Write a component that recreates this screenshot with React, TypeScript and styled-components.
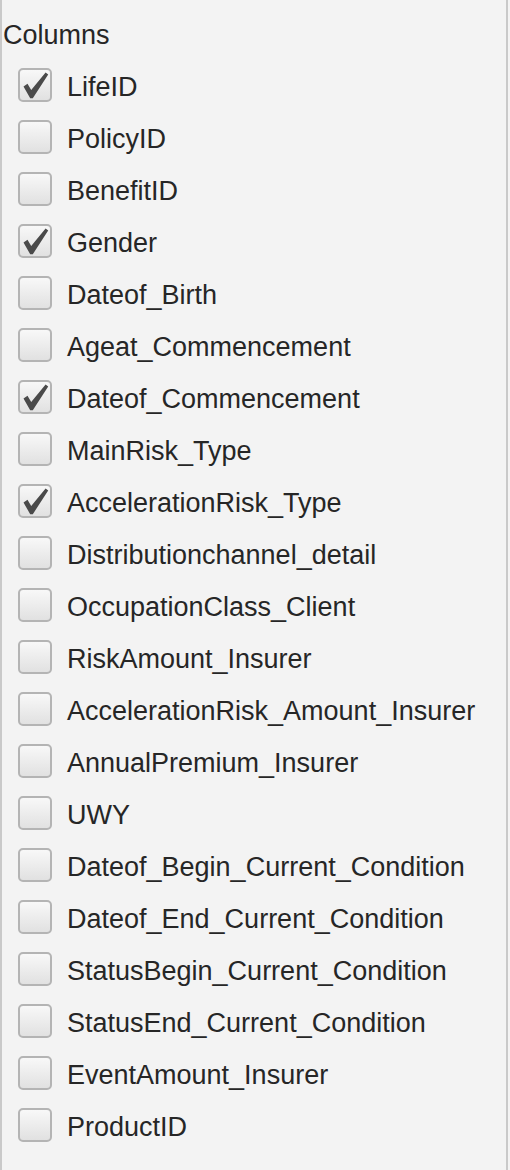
import React from 'react';
import styled, { createGlobalStyle } from 'styled-components';

const FONT = "'Liberation Sans', Arial, Helvetica, sans-serif";

const COLUMNS: { name: string; checked: boolean }[] = [
  { name: 'LifeID', checked: true },
  { name: 'PolicyID', checked: false },
  { name: 'BenefitID', checked: false },
  { name: 'Gender', checked: true },
  { name: 'Dateof_Birth', checked: false },
  { name: 'Ageat_Commencement', checked: false },
  { name: 'Dateof_Commencement', checked: true },
  { name: 'MainRisk_Type', checked: false },
  { name: 'AccelerationRisk_Type', checked: true },
  { name: 'Distributionchannel_detail', checked: false },
  { name: 'OccupationClass_Client', checked: false },
  { name: 'RiskAmount_Insurer', checked: false },
  { name: 'AccelerationRisk_Amount_Insurer', checked: false },
  { name: 'AnnualPremium_Insurer', checked: false },
  { name: 'UWY', checked: false },
  { name: 'Dateof_Begin_Current_Condition', checked: false },
  { name: 'Dateof_End_Current_Condition', checked: false },
  { name: 'StatusBegin_Current_Condition', checked: false },
  { name: 'StatusEnd_Current_Condition', checked: false },
  { name: 'EventAmount_Insurer', checked: false },
  { name: 'ProductID', checked: false },
];

const CheckMark: React.FC = () => (
  <svg width="34" height="34" viewBox="0 0 34 34" aria-hidden="true">
    <path d="M5.5 18.5 L9.5 15.8 L13.2 22 L27.6 4.6 L30.2 6.6 L14.8 30.2 L12.2 30.2 Z" fill="#4a4a4a" />
  </svg>
);

const App: React.FC = () => {
  return (
    <>
      <GlobalStyle />
      <Page>
        <Panel>
          <Title>Columns</Title>
          <List>
            {COLUMNS.map((c) => (
              <Row key={c.name}>
                <Box $checked={c.checked}>{c.checked && <CheckMark />}</Box>
                <Label>{c.name}</Label>
              </Row>
            ))}
          </List>
        </Panel>
      </Page>
    </>
  );
};

const GlobalStyle = createGlobalStyle`
  html, body {
    margin: 0;
    padding: 0;
    background: #f3f3f3;
  }
`;

const Page = styled.div`
  width: 510px;
  height: 1170px;
  background: #f3f3f3;
  font-family: ${FONT};
  color: #262626;
`;

const Panel = styled.div`
  width: 508px;
  height: 1170px;
  box-sizing: border-box;
  border-left: 2px solid #c9c9c9;
  border-right: 2px solid #c9c9c9;
  display: flex;
  flex-direction: column;
`;

const Title = styled.div`
  height: 59px;
  box-sizing: border-box;
  padding: 19px 0 0 1px;
  font-size: 27px;
  line-height: 32px;
`;

const List = styled.div`
  display: flex;
  flex-direction: column;
  padding-left: 16px;
`;

const Row = styled.div`
  height: 52px;
  display: flex;
  align-items: center;
  gap: 15px;
`;

const Box = styled.div<{ $checked: boolean }>`
  width: 34px;
  height: 34px;
  box-sizing: border-box;
  border: 2px solid #b4b4b4;
  border-radius: 5px;
  background: linear-gradient(#f8f8f8, #e1e1e1);
  position: relative;
  flex-shrink: 0;

  svg {
    position: absolute;
    left: -2px;
    top: -2px;
  }
`;

const Label = styled.span`
  font-size: 27px;
  line-height: 32px;
  padding-top: 3px;
  white-space: nowrap;
`;

export default App;
